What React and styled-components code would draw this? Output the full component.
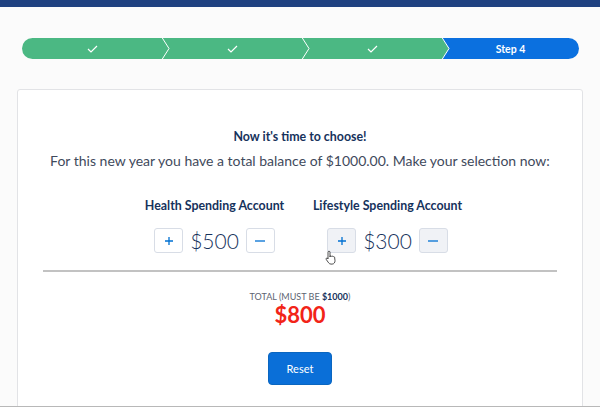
import React from 'react';
import styled, { createGlobalStyle } from 'styled-components';

const GlobalStyle = createGlobalStyle`
  html, body {
    margin: 0;
    padding: 0;
    background: #fbfbfb;
    font-family: Lato, "Open Sans", sans-serif;
    overflow: hidden;
  }
`;

const Page = styled.div`
  position: relative;
  width: 600px;
  height: 407px;
  overflow: hidden;
  border-bottom: 1px solid #b8b8b8;
  box-sizing: border-box;
`;

const TopBar = styled.div`
  height: 7px;
  background: #1f4180;
`;

const Progress = styled.div`
  display: flex;
  height: 21px;
  margin: 31px 21px 0 22px;
  border-radius: 11px;
  overflow: hidden;
`;

const Segment = styled.div`
  position: relative;
  flex: ${(p) => (p.$last ? '0 0 137px' : '0 0 140px')};
  display: flex;
  align-items: center;
  justify-content: center;
  background: ${(p) => (p.$current ? '#0b70df' : '#4bb883')};
  color: #fff;
  font-size: 10.5px;
  font-weight: 700;
  z-index: ${(p) => 10 - p.$index};
`;

const Arrow = styled.svg`
  position: absolute;
  top: 0;
  right: -8px;
  width: 9px;
  height: 21px;
`;

const Card = styled.div`
  margin: 30px 17px 0;
  background: #fff;
  border: 1px solid #e2e3e6;
  border-radius: 3px;
  padding: 38px 25px 40px;
  text-align: center;
  color: #16325c;
`;

const Title = styled.div`
  font-size: 12.4px;
  font-weight: 700;
  line-height: 18px;
`;

const Subtitle = styled.div`
  margin-top: 6px;
  font-size: 14px;
  line-height: 18px;
  color: #3f4a5c;
`;

const Accounts = styled.div`
  display: grid;
  grid-template-columns: 160px 160px;
  justify-content: center;
  column-gap: 13px;
  margin: 27px 0 0 2px;
`;

const Account = styled.div`
  display: flex;
  flex-direction: column;
  align-items: center;
`;

const AccountName = styled.div`
  font-size: 12.4px;
  font-weight: 700;
  line-height: 18px;
  white-space: nowrap;
`;

const Counter = styled.div`
  display: flex;
  align-items: center;
  gap: 7px;
  margin-top: 13px;
`;

const StepButton = styled.button`
  box-sizing: border-box;
  width: 29px;
  height: 25px;
  padding: 0;
  border: 1px solid #d8dde6;
  border-radius: 3px;
  background: ${(p) => (p.$hover ? '#f0f2f6' : '#fff')};
  display: flex;
  align-items: center;
  justify-content: center;
`;

const Amount = styled.div`
  font-size: 21px;
  font-weight: 300;
  color: #16325c;
  line-height: 25px;
`;

const Divider = styled.hr`
  margin: 17px 0 0;
  border: 0;
  height: 2px;
  background: #c2c2c2;
`;

const TotalLabel = styled.div`
  margin-top: 19px;
  font-size: 9px;
  color: #5d6472;
  text-transform: uppercase;
  line-height: 12px;

  b {
    color: #16325c;
  }
`;

const TotalValue = styled.div`
  font-size: 22px;
  font-weight: 700;
  color: #f22418;
  line-height: 24px;
`;

const ResetButton = styled.button`
  margin-top: 25px;
  width: 64px;
  height: 33px;
  border: 1px solid #0a66c0;
  border-radius: 4px;
  background: #0a6fd8;
  color: #fff;
  font-family: inherit;
  font-size: 11px;
  font-weight: 400;
`;

const Cursor = styled.svg`
  position: absolute;
  left: 325px;
  top: 250px;
  width: 12px;
  height: 15px;
  pointer-events: none;
`;

const Check = () => (
  <svg width="11" height="8" viewBox="0 0 11 8">
    <polyline points="1,4 4,7 10,1" fill="none" stroke="#fff" strokeWidth="1.2" />
  </svg>
);

const PlusIcon = () => (
  <svg width="8" height="8" viewBox="0 0 8 8">
    <path d="M4 0v8M0 4h8" stroke="#0070d2" strokeWidth="1.3" />
  </svg>
);

const MinusIcon = () => (
  <svg width="10" height="8" viewBox="0 0 10 8">
    <path d="M0 4h10" stroke="#0070d2" strokeWidth="1.3" />
  </svg>
);

const steps = [{ done: true }, { done: true }, { done: true }, { label: 'Step 4' }];

const accounts = [
  { name: 'Health Spending Account', amount: 500 },
  { name: 'Lifestyle Spending Account', amount: 300, hover: true },
];

const App = () => (
  <Page>
    <GlobalStyle />
    <TopBar />
    <Progress>
      {steps.map((s, i) => {
        const last = i === steps.length - 1;
        return (
          <Segment key={i} $index={i} $last={last} $current={!s.done}>
            {s.done ? <Check /> : s.label}
            {!last && (
              <Arrow viewBox="0 0 9 21">
                <polygon points="0,0 1,0 8,10.5 1,21 0,21" fill="#4bb883" />
                <polyline points="1,-0.5 8,10.5 1,21.5" fill="none" stroke="#fff" strokeWidth="1" />
              </Arrow>
            )}
          </Segment>
        );
      })}
    </Progress>
    <Card>
      <Title>Now it's time to choose!</Title>
      <Subtitle>For this new year you have a total balance of $1000.00. Make your selection now:</Subtitle>
      <Accounts>
        {accounts.map((a) => (
          <Account key={a.name}>
            <AccountName>{a.name}</AccountName>
            <Counter>
              <StepButton $hover={a.hover} aria-label="Add">
                <PlusIcon />
              </StepButton>
              <Amount>${a.amount}</Amount>
              <StepButton $hover={a.hover} aria-label="Subtract">
                <MinusIcon />
              </StepButton>
            </Counter>
          </Account>
        ))}
      </Accounts>
      <Divider />
      <TotalLabel>
        Total (must be <b>$1000</b>)
      </TotalLabel>
      <TotalValue>$800</TotalValue>
      <ResetButton>Reset</ResetButton>
    </Card>
    <Cursor viewBox="0 0 12 15">
      <path
        d="M4 1.2c.6 0 1 .4 1 1V7l.1-.9c.5-.4 1.3-.3 1.6.3.4-.4 1.2-.3 1.5.3.5-.3 1.3 0 1.4.6l.4 3.3c.1 1.6-.9 3.5-2.9 3.5H6c-1 0-1.8-.5-2.4-1.3L1.3 9.6c-.4-.5-.3-1.1.1-1.4.4-.3 1-.2 1.3.2L3 9V2.2c0-.6.4-1 1-1z"
        fill="#fff"
        stroke="#222"
        strokeWidth="0.8"
      />
    </Cursor>
  </Page>
);

export default App;
